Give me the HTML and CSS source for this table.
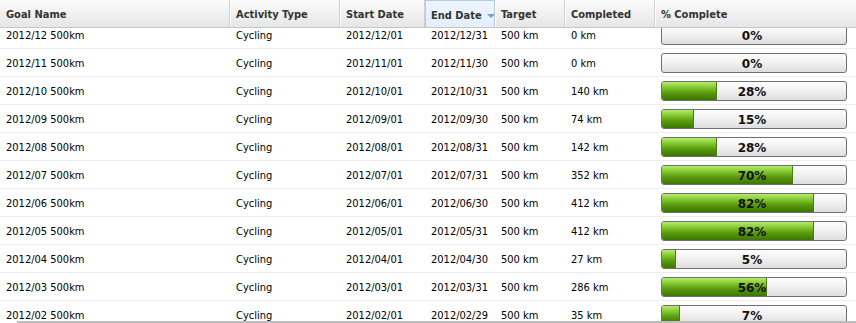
FILE: index.html
```html
<!DOCTYPE html>
<html>
<head>
<meta charset="utf-8">
<link rel="stylesheet" href="styles.css">
</head>
<body>
<div class="grid">
  <div class="header">
    <div class="hcell c1">Goal Name</div>
    <div class="hcell c2">Activity Type</div>
    <div class="hcell c3">Start Date</div>
    <div class="hcell c4 sorted">End Date<span class="arrow"></span></div>
    <div class="hcell c5">Target</div>
    <div class="hcell c6">Completed</div>
    <div class="hcell c7">% Complete</div>
  </div>
  <div class="body">
    <div class="rows">
      <div class="row"><div class="cell c1">2012/12 500km</div><div class="cell c2">Cycling</div><div class="cell c3">2012/12/01</div><div class="cell c4">2012/12/31</div><div class="cell c5">500 km</div><div class="cell c6">0 km</div><div class="cell c7"><div class="bar"><div class="fill empty" style="width:0px"></div><span class="pct">0%</span></div></div></div>
      <div class="row"><div class="cell c1">2012/11 500km</div><div class="cell c2">Cycling</div><div class="cell c3">2012/11/01</div><div class="cell c4">2012/11/30</div><div class="cell c5">500 km</div><div class="cell c6">0 km</div><div class="cell c7"><div class="bar"><div class="fill empty" style="width:0px"></div><span class="pct">0%</span></div></div></div>
      <div class="row"><div class="cell c1">2012/10 500km</div><div class="cell c2">Cycling</div><div class="cell c3">2012/10/01</div><div class="cell c4">2012/10/31</div><div class="cell c5">500 km</div><div class="cell c6">140 km</div><div class="cell c7"><div class="bar"><div class="fill" style="width:55px"></div><span class="pct">28%</span></div></div></div>
      <div class="row"><div class="cell c1">2012/09 500km</div><div class="cell c2">Cycling</div><div class="cell c3">2012/09/01</div><div class="cell c4">2012/09/30</div><div class="cell c5">500 km</div><div class="cell c6">74 km</div><div class="cell c7"><div class="bar"><div class="fill" style="width:32px"></div><span class="pct">15%</span></div></div></div>
      <div class="row"><div class="cell c1">2012/08 500km</div><div class="cell c2">Cycling</div><div class="cell c3">2012/08/01</div><div class="cell c4">2012/08/31</div><div class="cell c5">500 km</div><div class="cell c6">142 km</div><div class="cell c7"><div class="bar"><div class="fill" style="width:55px"></div><span class="pct">28%</span></div></div></div>
      <div class="row"><div class="cell c1">2012/07 500km</div><div class="cell c2">Cycling</div><div class="cell c3">2012/07/01</div><div class="cell c4">2012/07/31</div><div class="cell c5">500 km</div><div class="cell c6">352 km</div><div class="cell c7"><div class="bar"><div class="fill" style="width:131px"></div><span class="pct">70%</span></div></div></div>
      <div class="row"><div class="cell c1">2012/06 500km</div><div class="cell c2">Cycling</div><div class="cell c3">2012/06/01</div><div class="cell c4">2012/06/30</div><div class="cell c5">500 km</div><div class="cell c6">412 km</div><div class="cell c7"><div class="bar"><div class="fill" style="width:152px"></div><span class="pct">82%</span></div></div></div>
      <div class="row"><div class="cell c1">2012/05 500km</div><div class="cell c2">Cycling</div><div class="cell c3">2012/05/01</div><div class="cell c4">2012/05/31</div><div class="cell c5">500 km</div><div class="cell c6">412 km</div><div class="cell c7"><div class="bar"><div class="fill" style="width:152px"></div><span class="pct">82%</span></div></div></div>
      <div class="row"><div class="cell c1">2012/04 500km</div><div class="cell c2">Cycling</div><div class="cell c3">2012/04/01</div><div class="cell c4">2012/04/30</div><div class="cell c5">500 km</div><div class="cell c6">27 km</div><div class="cell c7"><div class="bar"><div class="fill" style="width:14px"></div><span class="pct">5%</span></div></div></div>
      <div class="row"><div class="cell c1">2012/03 500km</div><div class="cell c2">Cycling</div><div class="cell c3">2012/03/01</div><div class="cell c4">2012/03/31</div><div class="cell c5">500 km</div><div class="cell c6">286 km</div><div class="cell c7"><div class="bar"><div class="fill" style="width:105px"></div><span class="pct">56%</span></div></div></div>
      <div class="row"><div class="cell c1">2012/02 500km</div><div class="cell c2">Cycling</div><div class="cell c3">2012/02/01</div><div class="cell c4">2012/02/29</div><div class="cell c5">500 km</div><div class="cell c6">35 km</div><div class="cell c7"><div class="bar"><div class="fill" style="width:18px"></div><span class="pct">7%</span></div></div></div>
    </div>
  </div>
  <div class="hscroll"><div class="hscroll-bar"></div></div>
</div>
</body>
</html>
```
FILE: styles.css
```css
html, body {
  margin: 0;
  padding: 0;
  background: #fff;
}
.grid {
  width: 856px;
  height: 323px;
  display: flex;
  flex-direction: column;
  overflow: hidden;
  font-family: "DejaVu Sans Condensed", "DejaVu Sans", sans-serif;
  font-size: 11px;
  color: #000;
}
.header {
  display: flex;
  height: 27px;
  flex: none;
  border-bottom: 1px solid #c5c5c5;
  background: linear-gradient(#fbfbfb, #f3f3f3 40%, #e6e6e6);
}
.hcell {
  box-sizing: border-box;
  padding-left: 6px;
  padding-top: 2px;
  font-weight: bold;
  color: #333;
  border-right: 1px solid #d0d0d0;
  box-shadow: inset 1px 0 0 #fff;
  white-space: nowrap;
  display: flex;
  align-items: center;
}
.hcell.c1 { box-shadow: none; }
.hcell.c7 { border-right: none; }
.hcell.sorted {
  background: linear-gradient(#eef5fe, #e3eefc);
  border: 1px solid #b6cbe6;
  border-bottom: none;
  box-shadow: none;
  padding-left: 5px;
}
.arrow {
  width: 0;
  height: 0;
  margin-left: 5px;
  margin-top: 2px;
  border-left: 4px solid transparent;
  border-right: 4px solid transparent;
  border-top: 4px solid #7a9ccb;
}
.c1 { width: 230px; }
.c2 { width: 110px; }
.c3 { width: 85px; }
.c4 { width: 70px; }
.c5 { width: 70px; }
.c6 { width: 90px; }
.c7 { width: 201px; }
.body {
  flex: 1;
  overflow: hidden;
}
.rows {
  margin-top: -7px;
}
.row {
  display: flex;
  height: 27px;
  border-bottom: 1px solid #ededed;
}
.cell {
  box-sizing: border-box;
  padding-left: 6px;
  padding-top: 8px;
  white-space: nowrap;
  line-height: 13px;
}
.cell.c7 {
  padding-top: 4px;
}
.bar {
  position: relative;
  width: 184px;
  height: 18px;
  border: 1px solid #6f6f6f;
  border-radius: 3px;
  background: linear-gradient(#fdfdfd, #f2f2f2 45%, #dedede);
  overflow: hidden;
}
.fill {
  height: 100%;
  background: linear-gradient(#b4ec6a, #7cc32a 35%, #5a9a10 60%, #3d7600);
  border-right: 1px solid #4e7a12;
  box-sizing: border-box;
}
.fill.empty { border-right: none; }
.pct {
  position: absolute;
  left: 0;
  right: 0;
  top: 1px;
  text-align: center;
  line-height: 18px;
  font-family: "DejaVu Sans", sans-serif;
  font-weight: bold;
  font-size: 12px;
  color: #111;
  padding-right: 4px;
}
.hscroll {
  flex: none;
  height: 2px;
  display: flex;
  background: #fff;
}
.hscroll-bar {
  margin-left: 17px;
  flex: 1;
  border-top: 2px solid #bdbdbd;
}
```
